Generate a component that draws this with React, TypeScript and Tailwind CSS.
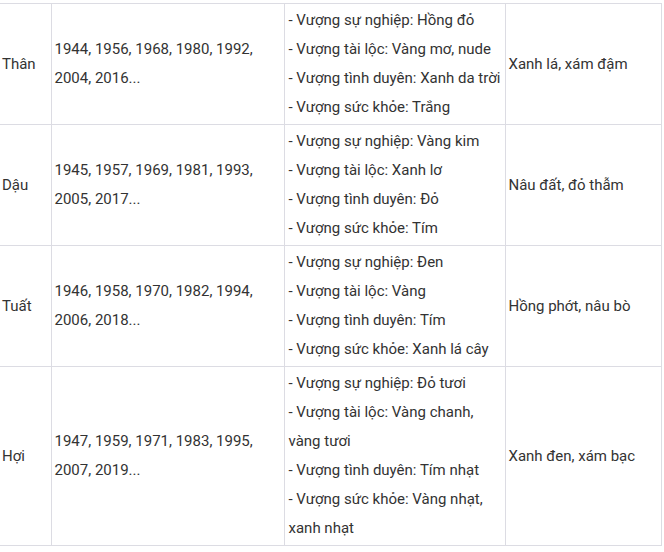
import React from 'react';

type Row = {
  name: string;
  years: string[];
  lucky: string[];
  avoid: string;
};

const rows: Row[] = [
  {
    name: 'Thân',
    years: ['1944, 1956, 1968, 1980, 1992,', '2004, 2016...'],
    lucky: [
      '- Vượng sự nghiệp: Hồng đỏ',
      '- Vượng tài lộc: Vàng mơ, nude',
      '- Vượng tình duyên: Xanh da trời',
      '- Vượng sức khỏe: Trắng',
    ],
    avoid: 'Xanh lá, xám đậm',
  },
  {
    name: 'Dậu',
    years: ['1945, 1957, 1969, 1981, 1993,', '2005, 2017...'],
    lucky: [
      '- Vượng sự nghiệp: Vàng kim',
      '- Vượng tài lộc: Xanh lơ',
      '- Vượng tình duyên: Đỏ',
      '- Vượng sức khỏe: Tím',
    ],
    avoid: 'Nâu đất, đỏ thẫm',
  },
  {
    name: 'Tuất',
    years: ['1946, 1958, 1970, 1982, 1994,', '2006, 2018...'],
    lucky: [
      '- Vượng sự nghiệp: Đen',
      '- Vượng tài lộc: Vàng',
      '- Vượng tình duyên: Tím',
      '- Vượng sức khỏe: Xanh lá cây',
    ],
    avoid: 'Hồng phớt, nâu bò',
  },
  {
    name: 'Hợi',
    years: ['1947, 1959, 1971, 1983, 1995,', '2007, 2019...'],
    lucky: [
      '- Vượng sự nghiệp: Đỏ tươi',
      '- Vượng tài lộc: Vàng chanh, vàng tươi',
      '- Vượng tình duyên: Tím nhạt',
      '- Vượng sức khỏe: Vàng nhạt, xanh nhạt',
    ],
    avoid: 'Xanh đen, xám bạc',
  },
];

export default function App() {
  return (
    <div className="w-[664px] h-[552px] bg-white overflow-hidden pt-[3px] font-['Roboto',sans-serif] text-[15px] leading-[29px] text-[#333]">
      <table className="table-fixed border-collapse w-[661px]">
        <colgroup>
          <col className="w-[51px]" />
          <col className="w-[233px]" />
          <col className="w-[221px]" />
          <col className="w-[156px]" />
        </colgroup>
        <tbody>
          {rows.map((row) => (
            <tr key={row.name}>
              <td className="border border-l-0 border-[#dcdce3] px-[2px] py-[2px] align-middle">
                {row.name}
              </td>
              <td className="border border-[#dcdce3] px-[3px] py-[2px] align-middle">
                {row.years.map((y) => (
                  <div key={y}>{y}</div>
                ))}
              </td>
              <td className="border border-[#dcdce3] pl-[4px] pr-[2px] py-[2px] align-middle">
                {row.lucky.map((l) => (
                  <div key={l}>{l}</div>
                ))}
              </td>
              <td className="border border-[#dcdce3] px-[3px] py-[2px] align-middle">
                {row.avoid}
              </td>
            </tr>
          ))}
        </tbody>
      </table>
    </div>
  );
}
